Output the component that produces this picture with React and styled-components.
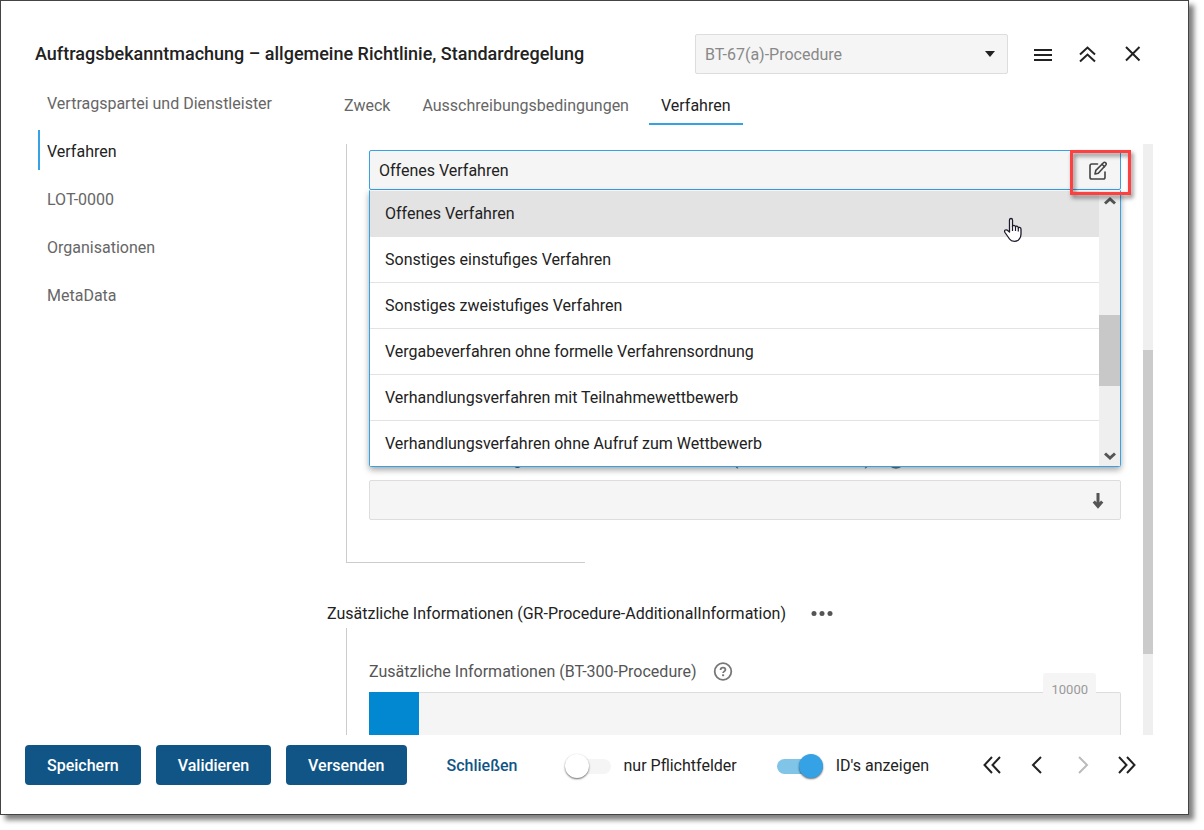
import { useState } from "react";
import styled, { createGlobalStyle, css } from "styled-components";

const GlobalStyle = createGlobalStyle`
  * {
    box-sizing: border-box;
  }

  body {
    margin: 0;
    background: #fff;
    color: #222;
    font-family: Roboto, "Liberation Sans", sans-serif;
    font-size: 16px;
    line-height: 24px;
  }

  button,
  input,
  select,
  textarea {
    font: inherit;
    color: inherit;
  }
`;

const Page = styled.div`
  height: 100vh;
  padding: 0 15px 15px 0;
`;

const Dialog = styled.main`
  display: flex;
  flex-direction: column;
  height: 100%;
  overflow: hidden;
  background: #fff;
  border: 1px solid #444;
  box-shadow: 5px 5px 5px rgba(0, 0, 0, 0.5);
`;

const Header = styled.header`
  display: flex;
  align-items: center;
  padding: 33px 33px 0 34px;
`;

const Title = styled.h1`
  flex: 1;
  margin: 0;
  font-size: 18px;
  font-weight: 500;
`;

const SelectBox = styled.div`
  display: grid;
  align-items: center;
  width: 313px;
  margin-right: 12px;

  > * {
    grid-area: 1 / 1;
  }

  svg {
    justify-self: end;
    margin-right: 12px;
    pointer-events: none;
  }
`;

const Select = styled.select`
  width: 100%;
  height: 40px;
  padding: 2px 9px 0;
  appearance: none;
  background: #f5f5f5;
  border: 1px solid #ddd;
  border-radius: 2px;
  color: #888;
`;

const IconButton = styled.button`
  display: flex;
  align-items: center;
  justify-content: center;
  width: 45px;
  height: 40px;
  padding: 0;
  background: none;
  border: 0;
  color: ${(props) => (props.disabled ? "#bbb" : "#222")};
`;

const Body = styled.div`
  display: grid;
  flex: 1;
  grid-template-columns: 289px 1fr;
  min-height: 0;
  padding: 8px 35px 0 37px;
`;

const Sidebar = styled.nav`
  display: flex;
  flex-direction: column;
  gap: 8px;
`;

const SidebarLink = styled.a`
  padding: 10px 7px 6px;
  border-left: 2px solid ${(props) => (props.$active ? "#36a2e6" : "transparent")};
  color: ${(props) => (props.$active ? "#222" : "#666")};
  text-decoration: none;
`;

const Content = styled.section`
  display: flex;
  flex-direction: column;
  min-width: 0;
  min-height: 0;
`;

const Tabs = styled.nav`
  display: flex;
  gap: 8px;
  padding: 2px 0 19px 5px;
`;

const Tab = styled.a`
  padding: 10px 12px 5px;
  border-bottom: 2px solid
    ${(props) => (props.$active ? "#36a2e6" : "transparent")};
  color: ${(props) => (props.$active ? "#222" : "#666")};
  text-decoration: none;
`;

const ScrollArea = styled.div`
  display: grid;
  flex: 1;
  grid-template-columns: 1fr 10px;
  gap: 22px;
  min-height: 0;
  overflow: hidden;
`;

const ScrollTrack = styled.div`
  padding-top: 206px;
  background: #efefef;
`;

const ScrollThumb = styled.div`
  height: 304px;
  background: #cbcbcb;
`;

const Form = styled.form`
  min-width: 0;
  min-height: 0;
`;

const Group = styled.div`
  margin-left: 19px;
  padding: ${(props) => (props.$first ? "6px 0 0 22px" : "32px 0 0 22px")};
  border-left: 1px solid #ccc;

  ${(props) =>
    props.$first &&
    css`
      &::after {
        content: "";
        display: block;
        width: 238px;
        margin: 42px 0 0 -22px;
        border-bottom: 1px solid #ccc;
      }
    `}
`;

const GroupTitle = styled.h2`
  display: flex;
  align-items: center;
  gap: 24px;
  margin: 39px 0 2px;
  font-size: 16px;
  font-weight: 400;
`;

const Label = styled.label`
  display: flex;
  align-items: center;
  gap: 16px;
  padding-bottom: 8px;
  color: #555;
`;

const FieldBox = styled.div`
  display: flex;
  align-items: center;
  height: 40px;
  padding-right: 12px;
  background: #f5f5f5;
  border: 1px solid ${(props) => (props.$open ? "#36a2e6" : "#ddd")};
  border-radius: 2px;
  color: #444;
`;

const TextInput = styled.input`
  flex: 1;
  min-width: 0;
  height: 100%;
  padding: 0 9px;
  background: none;
  border: 0;
  outline: 0;
  color: #222;
`;

const FieldButton = styled.button`
  display: flex;
  padding: 2px 0 0;
  background: none;
  border: 0;
`;

const Picker = styled.div`
  position: relative;
  margin-bottom: 258px;
`;

const Menu = styled.div`
  position: absolute;
  z-index: 1;
  top: 100%;
  right: 0;
  left: 0;
  display: grid;
  grid-template-columns: 1fr 21px;
  background: #fff;
  border: 1px solid #36a2e6;
  border-top-color: #f5f5f5;
  border-radius: 0 0 3px 3px;
  box-shadow: 0 3px 6px rgba(0, 0, 0, 0.35);
`;

const Options = styled.ul`
  margin: 0;
  padding: 0;
  list-style: none;
`;

const Option = styled.li`
  padding: 11px 15px 10px;
  background: ${(props) => (props.$hovered ? "#e3e3e3" : "#fff")};
  border-bottom: 1px solid #e3e3e3;

  &:last-child {
    border-bottom: 0;
  }
`;

const MenuScroll = styled.div`
  display: flex;
  flex-direction: column;
  align-items: center;
  justify-content: space-between;
  padding: 4px 0;
  background: #efefef;
  color: #555;
`;

const MenuThumb = styled.div`
  width: 100%;
  height: 71px;
  margin-top: 44px;
  background: #c8c8c8;
`;

const Highlight = styled.div`
  position: absolute;
  z-index: 2;
  top: 0;
  right: -10px;
  width: 61px;
  height: 45px;
  border: 3px solid #ff4040;
  filter: drop-shadow(2px 3px 2px rgba(0, 0, 0, 0.5));
  pointer-events: none;
`;

const Pointer = styled.svg`
  position: absolute;
  z-index: 2;
  top: 67px;
  right: 98px;
`;

const Editor = styled.div`
  position: relative;
  display: flex;
  height: 120px;
  background: #f5f5f5;
  border: 1px solid #ddd;
  border-left: 0;
  border-radius: 2px;
`;

const EditorButton = styled.button`
  width: 50px;
  margin: -1px 0;
  padding: 0;
  background: #0288d1;
  border: 0;
`;

const TextArea = styled.textarea`
  flex: 1;
  padding: 8px;
  background: none;
  border: 0;
  outline: 0;
  resize: none;
`;

const Counter = styled.span`
  position: absolute;
  top: -20px;
  right: 24px;
  padding: 5px 8px 0;
  background: #f5f5f5;
  border-radius: 3px;
  color: #999;
  font-size: 13px;
`;

const Footer = styled.footer`
  display: flex;
  align-items: center;
  padding: 10px 38px 29px 24px;
`;

const Button = styled.button`
  height: 40px;
  margin-right: 15px;
  padding: ${(props) => (props.$plain ? "2px 25px 0" : "2px 22px 0")};
  background: ${(props) => (props.$plain ? "none" : "#115586")};
  border: 0;
  border-radius: 4px;
  color: ${(props) => (props.$plain ? "#115586" : "#fff")};
  font-weight: 500;
`;

const Switch = styled.label`
  display: flex;
  align-items: center;
  gap: 13px;
  margin-left: ${(props) => (props.$wide ? "40px" : "7px")};
`;

const SwitchText = styled.span`
  padding-top: 2px;
`;

const SwitchInput = styled.input`
  display: flex;
  align-items: center;
  width: 46px;
  height: 15px;
  margin: 2px 0 0;
  appearance: none;
  background: #f5f5f5;
  border-radius: 8px;

  &::before {
    content: "";
    width: 24px;
    height: 24px;
    background: #fff;
    border-radius: 50%;
    box-shadow: 0 1px 2px rgba(0, 0, 0, 0.6);
  }

  &:checked {
    justify-content: flex-end;
    background: #80c4e8;
  }

  &:checked::before {
    background: #36a2e6;
  }
`;

const Pager = styled.div`
  display: flex;
  margin-left: auto;
`;

const sections = [
  "Vertragspartei und Dienstleister",
  "Verfahren",
  "LOT-0000",
  "Organisationen",
  "MetaData",
];

const tabs = ["Zweck", "Ausschreibungsbedingungen", "Verfahren"];

const procedures = [
  "Offenes Verfahren",
  "Sonstiges einstufiges Verfahren",
  "Sonstiges zweistufiges Verfahren",
  "Vergabeverfahren ohne formelle Verfahrensordnung",
  "Verhandlungsverfahren mit Teilnahmewettbewerb",
  "Verhandlungsverfahren ohne Aufruf zum Wettbewerb",
];

function LineIcon({ d, size = 24, width = 2 }) {
  return (
    <svg
      width={size}
      height={size}
      viewBox={`0 0 ${size} ${size}`}
      fill="none"
      stroke="currentColor"
      strokeWidth={width}
      aria-hidden="true"
    >
      <path d={d} />
    </svg>
  );
}

function HelpIcon() {
  return (
    <svg width="20" height="20" viewBox="0 0 20 20" fill="none" stroke="#777">
      <circle cx="10" cy="9.5" r="8.3" strokeWidth="1.8" />
      <path
        d="M7.6 7.9c0-1.5 1-2.3 2.4-2.3s2.4.8 2.4 2.1c0 1.7-2.3 1.7-2.3 3.4"
        strokeWidth="1.8"
      />
      <path d="M10.1 12.3v1.9" strokeWidth="2" />
    </svg>
  );
}

function EditIcon() {
  return (
    <svg
      width="20"
      height="20"
      viewBox="0 0 20 20"
      fill="none"
      stroke="currentColor"
      strokeWidth="1.6"
      strokeLinejoin="round"
      strokeLinecap="round"
    >
      <path d="M9.5 3H3.8Q2 3 2 4.8V16.2Q2 18 3.8 18H15.2Q17 18 17 16.2V11" />
      <path d="M7 13l.8-3.6 7.7-7.7q1.1-.9 2.2.1 1 1.1.1 2.2L10.3 12.2z" />
      <path d="M14 3.300l2.500 2.500" />
    </svg>
  );
}

function PointerIcon() {
  return (
    <Pointer width="20" height="26" viewBox="0 0 20 26">
      <path
        d="M6.5 15V3.2Q6.5 1.5 8 1.5T9.5 3.2V9.5Q9.7 8.2 11 8.3T12.5 10Q12.7 9 13.9 9.2T15.3 11Q15.6 10.2 16.6 10.4 18 10.7 18 12.2V17Q18 20 16.3 22 15 24.3 11.5 24.3 8 24.3 6.5 22L2 15.5Q1 13.7 2.3 13 3.7 12.4 5 13.7z"
        fill="#fff"
        stroke="#1b1b2b"
        strokeWidth="1.3"
        strokeLinejoin="round"
      />
      <path
        d="M9.5 9v5M12.5 10v4M15.3 11v3.5"
        stroke="#1b1b2b"
        strokeWidth="1.2"
      />
    </Pointer>
  );
}

function ProcedurePicker() {
  return (
    <Picker>
      <FieldBox $open>
        <TextInput
          aria-label="Verfahrensart"
          role="combobox"
          aria-expanded="true"
          aria-controls="procedures"
          defaultValue={procedures[0]}
        />
        <FieldButton type="button" aria-label="Bearbeiten">
          <EditIcon />
        </FieldButton>
      </FieldBox>
      <Menu>
        <Options id="procedures" role="listbox">
          {procedures.map((el, i) => (
            <Option
              key={el}
              role="option"
              aria-selected={i === 0}
              $hovered={i === 0}
            >
              {el}
            </Option>
          ))}
        </Options>
        <MenuScroll>
          <LineIcon size={12} width={3} d="M1 8.5L6 4l5 4.5" />
          <MenuThumb />
          <LineIcon size={12} width={3} d="M1 3.5L6 8l5-4.5" />
        </MenuScroll>
      </Menu>
      <Highlight />
      <PointerIcon />
    </Picker>
  );
}

function Toggle({ label, defaultChecked, wide }) {
  const [checked, setChecked] = useState(defaultChecked);

  return (
    <Switch $wide={wide}>
      <SwitchInput
        type="checkbox"
        checked={checked}
        onChange={(e) => setChecked(e.target.checked)}
      />
      <SwitchText>{label}</SwitchText>
    </Switch>
  );
}

function App() {
  return (
    <Page>
      <GlobalStyle />
      <Dialog>
        <Header>
          <Title>
            Auftragsbekanntmachung – allgemeine Richtlinie, Standardregelung
          </Title>
          <SelectBox>
            <Select aria-label="Feld">
              <option>BT-67(a)-Procedure</option>
            </Select>
            <svg width="12" height="6" viewBox="0 0 12 6">
              <path d="M1 0h10L6 6z" fill="#222" />
            </svg>
          </SelectBox>
          <IconButton aria-label="Menü">
            <LineIcon d="M3 8h18M3 13h18M3 18h18" />
          </IconButton>
          <IconButton aria-label="Einklappen">
            <LineIcon d="M4 12.5l7.500-7 7.500 7M4 19.500l7.500-7 7.500 7" />
          </IconButton>
          <IconButton aria-label="Dialog schließen">
            <LineIcon d="M5 5l13.500 13.500M18.500 5L5 18.500" />
          </IconButton>
        </Header>
        <Body>
          <Sidebar>
            {sections.map((el, i) => (
              <SidebarLink key={el} href="#" $active={i === 1}>
                {el}
              </SidebarLink>
            ))}
          </Sidebar>
          <Content>
            <Tabs>
              {tabs.map((el, i) => (
                <Tab key={el} href="#" $active={i === 2}>
                  {el}
                </Tab>
              ))}
            </Tabs>
            <ScrollArea>
              <Form>
                <Group $first>
                  <ProcedurePicker />
                  <Label htmlFor="accelerated">
                    Art eines beschleunigten Verfahrens nach Kriterien
                    (BT-106-Procedure)
                    <HelpIcon />
                  </Label>
                  <FieldBox>
                    <TextInput id="accelerated" />
                    <FieldButton type="button" aria-label="Auswahl öffnen">
                      <svg width="20" height="20" viewBox="0 0 20 20">
                        <path
                          d="M10 2v14M5.800 10.500L10 15.500l4.200-5"
                          fill="none"
                          stroke="#555"
                          strokeWidth="3"
                        />
                      </svg>
                    </FieldButton>
                  </FieldBox>
                </Group>
                <GroupTitle>
                  Zusätzliche Informationen (GR-Procedure-AdditionalInformation)
                  <svg width="24" height="6" viewBox="0 0 24 6" fill="#555">
                    <circle cx="4" cy="2.5" r="2.5" />
                    <circle cx="12" cy="2.5" r="2.5" />
                    <circle cx="20" cy="2.5" r="2.5" />
                  </svg>
                </GroupTitle>
                <Group>
                  <Label htmlFor="additional">
                    Zusätzliche Informationen (BT-300-Procedure)
                    <HelpIcon />
                  </Label>
                  <Editor>
                    <EditorButton type="button" aria-label="Sprache" />
                    <TextArea id="additional" />
                    <Counter>10000</Counter>
                  </Editor>
                </Group>
              </Form>
              <ScrollTrack>
                <ScrollThumb />
              </ScrollTrack>
            </ScrollArea>
          </Content>
        </Body>
        <Footer>
          <Button>Speichern</Button>
          <Button>Validieren</Button>
          <Button>Versenden</Button>
          <Button $plain>Schließen</Button>
          <Toggle label="nur Pflichtfelder" defaultChecked={false} />
          <Toggle label="ID's anzeigen" defaultChecked wide />
          <Pager>
            <IconButton aria-label="Erste Seite">
              <LineIcon d="M11 4L3.500 12l7.500 8M19 4l-7.500 8 7.500 8" />
            </IconButton>
            <IconButton aria-label="Vorherige Seite">
              <LineIcon d="M15 4L7 12l8 8" />
            </IconButton>
            <IconButton aria-label="Nächste Seite" disabled>
              <LineIcon d="M8 4l8 8-8 8" />
            </IconButton>
            <IconButton aria-label="Letzte Seite">
              <LineIcon d="M3 4l7.500 8L3 20M11 4l7.500 8-7.500 8" />
            </IconButton>
          </Pager>
        </Footer>
      </Dialog>
    </Page>
  );
}

export default App;
